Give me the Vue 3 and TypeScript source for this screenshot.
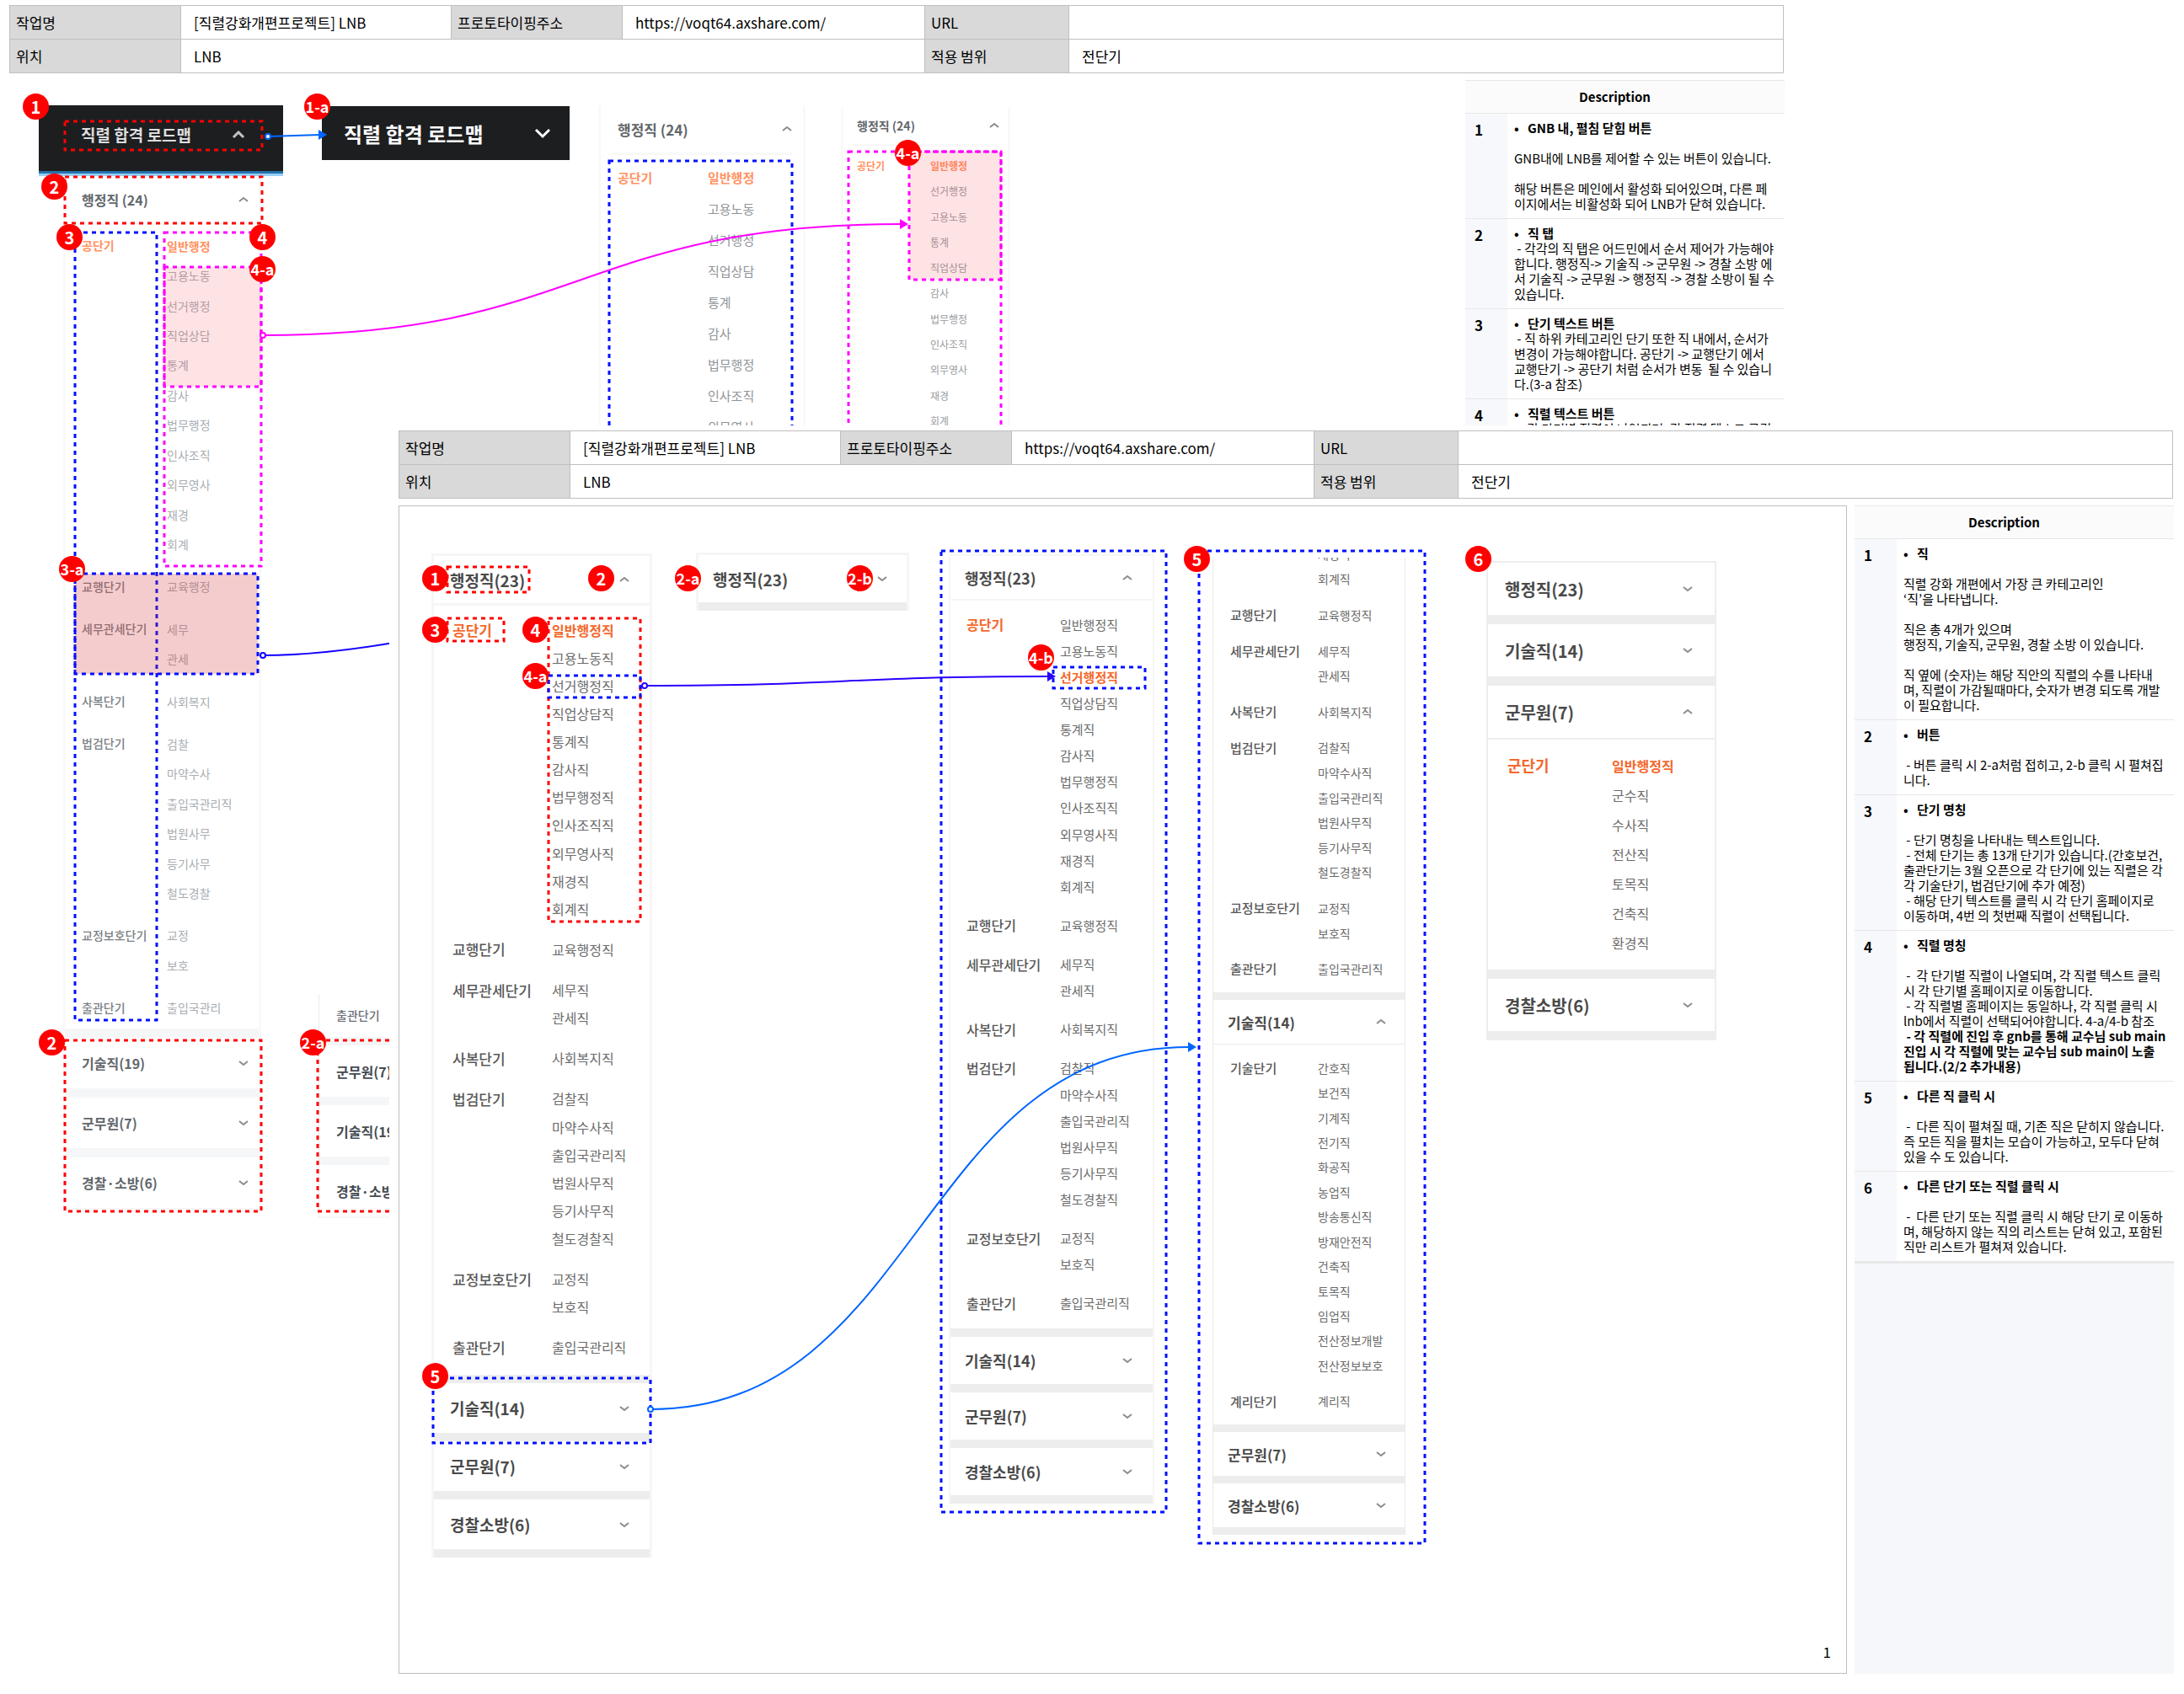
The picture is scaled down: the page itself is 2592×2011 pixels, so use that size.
<script setup lang="ts">
type Direction = 'up' | 'down'

interface Group {
  name: string
  items: string[]
  activeName?: boolean
  activeItem?: number
}

interface Section {
  title?: string
  arrow?: Direction
  groups?: Group[]
  height?: number
}

interface Panel {
  kind: string
  x: number
  y: number
  width: number
  sections: Section[]
}

interface Marker {
  label: string
  x: number
  y: number
}

interface Frame {
  tone: 'red' | 'blue' | 'magenta'
  x: number
  y: number
  w: number
  h: number
  fill?: 'rose' | 'brick'
}

interface Connector {
  tone: string
  start: [number, number]
  path: string
  tip?: [number, number]
}

interface Line {
  text: string
  strong?: boolean
}

interface Note {
  no: number
  title: string
  lines: Line[]
}

interface Board {
  id: string
  panels: Panel[]
  markers: Marker[]
  frames: Frame[]
  connectors: Connector[]
  notes: Note[]
  page?: number
}

const plain = (...rows: string[]): Line[] => rows.map((text) => ({ text }))

const oldGroups: Group[] = [
  {
    name: '공단기',
    items: ['일반행정', '고용노동', '선거행정', '직업상담', '통계', '감사', '법무행정', '인사조직', '외무영사', '재경', '회계'],
    activeName: true,
    activeItem: 0
  },
  { name: '교행단기', items: ['교육행정'] },
  { name: '세무관세단기', items: ['세무', '관세'] },
  { name: '사복단기', items: ['사회복지'] },
  { name: '법검단기', items: ['검찰', '마약수사', '출입국관리직', '법원사무', '등기사무', '철도경찰'] },
  { name: '교정보호단기', items: ['교정', '보호'] },
  { name: '출관단기', items: ['출입국관리'] }
]

const shortGroup: Group = { ...oldGroups[0], items: oldGroups[0].items.slice(0, 9) }

const reorderedGroup: Group = {
  name: '공단기',
  items: ['일반행정', '선거행정', '고용노동', '통계', '직업상담', '감사', '법무행정', '인사조직', '외무영사', '재경', '회계'],
  activeName: true,
  activeItem: 0
}

const laterGroups: Group[] = [
  { name: '교행단기', items: ['교육행정직'] },
  { name: '세무관세단기', items: ['세무직', '관세직'] },
  { name: '사복단기', items: ['사회복지직'] },
  { name: '법검단기', items: ['검찰직', '마약수사직', '출입국관리직', '법원사무직', '등기사무직', '철도경찰직'] },
  { name: '교정보호단기', items: ['교정직', '보호직'] },
  { name: '출관단기', items: ['출입국관리직'] }
]

const adminGroups = (activeItem: number): Group[] => [
  {
    name: '공단기',
    items: ['일반행정직', '고용노동직', '선거행정직', '직업상담직', '통계직', '감사직', '법무행정직', '인사조직직', '외무영사직', '재경직', '회계직'],
    activeName: true,
    activeItem
  },
  ...laterGroups
]

const techGroups: Group[] = [
  {
    name: '기술단기',
    items: ['간호직', '보건직', '기계직', '전기직', '화공직', '농업직', '방송통신직', '방재안전직', '건축직', '토목직', '임업직', '전산정보개발', '전산정보보호']
  },
  { name: '계리단기', items: ['계리직'] }
]

const closed = (...titles: string[]): Section[] => titles.map((title) => ({ title, arrow: 'down' as Direction }))

const boards: Board[] = [
  {
    id: 'back',
    panels: [
      {
        kind: 'first',
        x: 75,
        y: 210,
        width: 235,
        sections: [
          { title: '행정직 (24)', arrow: 'up', groups: oldGroups, height: 940 },
          ...closed('기술직(19)', '군무원(7)', '경찰·소방(6)')
        ]
      },
      {
        kind: 'second',
        x: 378,
        y: 1181,
        width: 235,
        sections: [
          { groups: [{ name: '출관단기', items: [''] }], height: 35 },
          ...closed('군무원(7)', '기술직(19)', '경찰·소방(6)')
        ]
      },
      {
        kind: 'third',
        x: 710,
        y: 125,
        width: 246,
        sections: [{ title: '행정직 (24)', arrow: 'up', groups: [shortGroup], height: 334 }]
      },
      {
        kind: 'fourth',
        x: 998,
        y: 127,
        width: 201,
        sections: [{ title: '행정직 (24)', arrow: 'up', groups: [reorderedGroup], height: 333 }]
      }
    ],
    markers: [
      { label: '1', x: 42, y: 126 },
      { label: '1-a', x: 376, y: 126 },
      { label: '2', x: 64, y: 221 },
      { label: '3', x: 82, y: 281 },
      { label: '4', x: 311, y: 281 },
      { label: '4-a', x: 311, y: 319 },
      { label: '4-a', x: 1077, y: 181 },
      { label: '3-a', x: 85, y: 675 },
      { label: '2', x: 61, y: 1237 },
      { label: '2-a', x: 371, y: 1237 }
    ],
    frames: [
      { tone: 'red', x: 77, y: 144, w: 234, h: 34 },
      { tone: 'red', x: 77, y: 210, w: 234, h: 55 },
      { tone: 'blue', x: 89, y: 276, w: 97, h: 935 },
      { tone: 'magenta', x: 195, y: 276, w: 115, h: 396 },
      { tone: 'magenta', x: 195, y: 317, w: 115, h: 142, fill: 'rose' },
      { tone: 'blue', x: 89, y: 681, w: 217, h: 119, fill: 'brick' },
      { tone: 'red', x: 77, y: 1235, w: 233, h: 203 },
      { tone: 'red', x: 377, y: 1235, w: 236, h: 203 },
      { tone: 'blue', x: 723, y: 191, w: 217, h: 420 },
      { tone: 'magenta', x: 1007, y: 180, w: 181, h: 400 },
      { tone: 'magenta', x: 1079, y: 180, w: 109, h: 152, fill: 'rose' }
    ],
    connectors: [
      { tone: '#0066ff', start: [318, 162], path: 'M318 162L380 160', tip: [388, 160] },
      { tone: '#ff00ff', start: [312, 398], path: 'M312 398C690 398 690 266 1069 266', tip: [1078, 266] },
      { tone: '#1400ff', start: [312, 778], path: 'M312 778C370 778 430 770 490 759' }
    ],
    notes: [
      {
        no: 1,
        title: 'GNB 내, 펼침 닫힘 버튼',
        lines: plain('', 'GNB내에 LNB를 제어할 수 있는 버튼이 있습니다.', '', '해당 버튼은 메인에서 활성화 되어있으며, 다른 페', '이지에서는 비활성화 되어 LNB가 닫혀 있습니다.')
      },
      {
        no: 2,
        title: '직 탭',
        lines: plain(' - 각각의 직 탭은 어드민에서 순서 제어가 가능해야', '합니다. 행정직-> 기술직 -> 군무원 -> 경찰 소방 에', '서 기술직 -> 군무원 -> 행정직 -> 경찰 소방이 될 수', '있습니다.')
      },
      {
        no: 3,
        title: '단기 텍스트 버튼',
        lines: plain(' - 직 하위 카테고리인 단기 또한 직 내에서, 순서가', '변경이 가능해야합니다. 공단기 -> 교행단기 에서', '교행단기 -> 공단기 처럼 순서가 변동  될 수 있습니', '다.(3-a 참조)')
      },
      {
        no: 4,
        title: '직렬 텍스트 버튼',
        lines: plain(' -  각 단기별 직렬이 나열되며, 각 직렬 텍스트 클릭')
      }
    ]
  },
  {
    id: 'front',
    panels: [
      {
        kind: 'fifth',
        x: 50,
        y: 152,
        width: 262,
        sections: [
          { title: '행정직(23)', arrow: 'up', groups: adminGroups(0), height: 885 },
          ...closed('기술직(14)', '군무원(7)', '경찰소방(6)')
        ]
      },
      { kind: 'sixth', x: 364, y: 151, width: 253, sections: closed('행정직(23)') },
      {
        kind: 'seventh',
        x: 664,
        y: 153,
        width: 244,
        sections: [
          { title: '행정직(23)', arrow: 'up', groups: adminGroups(2), height: 837 },
          ...closed('기술직(14)', '군무원(7)', '경찰소방(6)')
        ]
      },
      {
        kind: 'eighth',
        x: 977,
        y: 157,
        width: 229,
        sections: [
          { groups: [{ name: '', items: ['재경직', '회계직'] }, ...laterGroups], height: 522 },
          { title: '기술직(14)', arrow: 'up', groups: techGroups, height: 425 },
          ...closed('군무원(7)', '경찰소방(6)')
        ]
      },
      {
        kind: 'ninth',
        x: 1302,
        y: 161,
        width: 273,
        sections: [
          ...closed('행정직(23)', '기술직(14)'),
          {
            title: '군무원(7)',
            arrow: 'up',
            groups: [
              {
                name: '군단기',
                items: ['일반행정직', '군수직', '수사직', '전산직', '토목직', '건축직', '환경직'],
                activeName: true,
                activeItem: 0
              }
            ],
            height: 245
          },
          ...closed('경찰소방(6)')
        ]
      }
    ],
    markers: [
      { label: '1', x: 54, y: 181 },
      { label: '2', x: 251, y: 181 },
      { label: '2-a', x: 354, y: 181 },
      { label: '2-b', x: 558, y: 181 },
      { label: '3', x: 54, y: 242 },
      { label: '4', x: 173, y: 242 },
      { label: '4-a', x: 173, y: 297 },
      { label: '5', x: 54, y: 1128 },
      { label: '4-b', x: 773, y: 275 },
      { label: '5', x: 958, y: 158 },
      { label: '6', x: 1292, y: 158 }
    ],
    frames: [
      { tone: 'red', x: 69, y: 168, w: 97, h: 30 },
      { tone: 'red', x: 69, y: 229, w: 67, h: 27 },
      { tone: 'red', x: 189, y: 229, w: 109, h: 360 },
      { tone: 'blue', x: 189, y: 297, w: 109, h: 26 },
      { tone: 'blue', x: 52, y: 1131, w: 258, h: 77 },
      { tone: 'blue', x: 655, y: 149, w: 267, h: 1141 },
      { tone: 'blue', x: 788, y: 287, w: 109, h: 25 },
      { tone: 'blue', x: 961, y: 149, w: 268, h: 1178 }
    ],
    connectors: [
      { tone: '#2a00ff', start: [303, 309], path: 'M303 309C542 309 542 298 782 298', tip: [791, 298] },
      { tone: '#0066ff', start: [310, 1168], path: 'M310 1168C629 1168 629 738 949 738', tip: [958, 738] }
    ],
    notes: [
      {
        no: 1,
        title: '직',
        lines: plain('', '직렬 강화 개편에서 가장 큰 카테고리인', '‘직’을 나타냅니다.', '', '직은 총 4개가 있으며', '행정직, 기술직, 군무원, 경찰 소방 이 있습니다.', '', '직 옆에 (숫자)는 해당 직안의 직렬의 수를 나타내', '며, 직렬이 가감될때마다, 숫자가 변경 되도록 개발', '이 필요합니다.')
      },
      { no: 2, title: '버튼', lines: plain('', ' - 버튼 클릭 시 2-a처럼 접히고, 2-b 클릭 시 펼쳐집', '니다.') },
      {
        no: 3,
        title: '단기 명칭',
        lines: plain('', ' - 단기 명칭을 나타내는 텍스트입니다.', ' - 전체 단기는 총 13개 단기가 있습니다.(간호보건,', '출관단기는 3월 오픈으로 각 단기에 있는 직렬은 각', '각 기술단기, 법검단기에 추가 예정)', ' - 해당 단기 텍스트를 클릭 시 각 단기 홈페이지로', '이동하며, 4번 의 첫번째 직렬이 선택됩니다.')
      },
      {
        no: 4,
        title: '직렬 명칭',
        lines: [
          ...plain('', ' -  각 단기별 직렬이 나열되며, 각 직렬 텍스트 클릭', '시 각 단기별 홈페이지로 이동합니다.', ' - 각 직렬별 홈페이지는 동일하나, 각 직렬 클릭 시', 'lnb에서 직렬이 선택되어야합니다. 4-a/4-b 참조'),
          { text: ' - 각 직렬에 진입 후 gnb를 통해 교수님 sub main', strong: true },
          { text: '진입 시 각 직렬에 맞는 교수님 sub main이 노출', strong: true },
          { text: '됩니다.(2/2 추가내용)', strong: true }
        ]
      },
      {
        no: 5,
        title: '다른 직 클릭 시',
        lines: plain('', ' -  다른 직이 펼쳐질 때, 기존 직은 닫히지 않습니다.', '즉 모든 직을 펼치는 모습이 가능하고, 모두다 닫혀', '있을 수 도 있습니다.')
      },
      {
        no: 6,
        title: '다른 단기 또는 직렬 클릭 시',
        lines: plain('', ' -  다른 단기 또는 직렬 클릭 시 해당 단기 로 이동하', '며, 해당하지 않는 직의 리스트는 닫혀 있고, 포함된', '직만 리스트가 펼쳐져 있습니다.')
      }
    ],
    page: 1
  }
]

const at = (p: { x: number; y: number }) => ({ left: `${p.x}px`, top: `${p.y}px` })
const arrowHead = ([x, y]: [number, number]) => `${x},${y} ${x - 10},${y - 6} ${x - 10},${y + 6}`
</script>

<template>
  <main class="stage">
    <article v-for="board in boards" :key="board.id" class="board" :class="board.id">
      <table class="meta">
        <colgroup>
          <col class="c-label" /><col class="c-name" /><col class="c-label" /><col class="c-address" /><col class="c-scope" /><col />
        </colgroup>
        <tbody>
          <tr>
            <th scope="row">작업명</th>
            <td>[직렬강화개편프로젝트] LNB</td>
            <th scope="row">프로토타이핑주소</th>
            <td><a href="https://voqt64.axshare.com/">https://voqt64.axshare.com/</a></td>
            <th scope="row">URL</th>
            <td></td>
          </tr>
          <tr>
            <th scope="row">위치</th>
            <td colspan="3">LNB</td>
            <th scope="row">적용 범위</th>
            <td>전단기</td>
          </tr>
        </tbody>
      </table>

      <div class="body">
        <section class="canvas">
          <template v-if="board.id === 'back'">
            <button type="button" class="gnb gnb-open">
              <span>직렬 합격 로드맵</span>
              <svg width="16" height="10" viewBox="0 0 16 10"><path d="M2 8L8 2L14 8" /></svg>
            </button>
            <button type="button" class="gnb gnb-closed">
              <span>직렬 합격 로드맵</span>
              <svg width="20" height="13" viewBox="0 0 20 13"><path d="M2 2L10 10L18 2" /></svg>
            </button>
          </template>

          <nav
            v-for="panel in board.panels"
            :key="panel.kind"
            class="lnb"
            :class="panel.kind"
            :style="{ ...at(panel), width: `${panel.width}px` }"
          >
            <div v-for="(section, s) in panel.sections" :key="s" class="section">
              <button v-if="section.title" type="button" class="row">
                <span>{{ section.title }}</span>
                <svg class="chevron" width="12" height="8" viewBox="0 0 12 8">
                  <path :d="section.arrow === 'up' ? 'M1 6L6 2L11 6' : 'M1 2L6 6L11 2'" />
                </svg>
              </button>
              <div v-if="section.groups" class="open">
                <div class="groups" :style="{ height: `${section.height}px` }">
                  <div v-for="(group, g) in section.groups" :key="g" class="group" :style="{ flexGrow: group.items.length }">
                    <a href="#" class="name" :class="{ active: group.activeName }">{{ group.name }}</a>
                    <ul>
                      <li v-for="(item, i) in group.items" :key="item">
                        <a href="#" :class="{ active: group.activeItem === i }">{{ item }}</a>
                      </li>
                    </ul>
                  </div>
                </div>
              </div>
            </div>
          </nav>

          <svg class="overlay" aria-hidden="true">
            <rect
              v-for="(f, i) in board.frames"
              :key="`f${i}`"
              class="frame"
              :class="[f.tone, f.fill]"
              :x="f.x"
              :y="f.y"
              :width="f.w"
              :height="f.h"
            />
            <g v-for="(c, i) in board.connectors" :key="`c${i}`" :stroke="c.tone">
              <path class="wire" :d="c.path" />
              <polygon v-if="c.tip" :points="arrowHead(c.tip)" :fill="c.tone" stroke="none" />
              <circle class="port" :cx="c.start[0]" :cy="c.start[1]" r="3" />
            </g>
          </svg>

          <span
            v-for="(m, i) in board.markers"
            :key="`m${i}`"
            class="marker"
            :class="{ long: m.label.length > 1 }"
            :style="at(m)"
          >{{ m.label }}</span>

          <span v-if="board.page" class="page">{{ board.page }}</span>
        </section>

        <aside class="side">
          <table class="notes">
            <thead>
              <tr><th colspan="2" scope="col">Description</th></tr>
            </thead>
            <tbody>
              <tr v-for="note in board.notes" :key="note.no">
                <th scope="row">{{ note.no }}</th>
                <td>
                  <p class="note-title"><span class="dot">•</span>{{ note.title }}</p>
                  <p v-for="(line, l) in note.lines" :key="l" :class="{ strong: line.strong }">{{ line.text }}</p>
                </td>
              </tr>
            </tbody>
          </table>
        </aside>
      </div>
    </article>
  </main>
</template>

<style>
body {
  background: #fff;
}
</style>

<style scoped>
.stage {
  display: grid;
  padding-bottom: 24px;
  overflow: hidden;
  font-family: "Noto Sans CJK KR", "Noto Sans", sans-serif;
  color: #000;
}
.board {
  position: relative;
  grid-area: 1 / 1;
  align-self: start;
  box-sizing: border-box;
  width: calc(100% - 475px);
  padding: 6px 0 0 11px;
  background: #fff;
}
.front {
  margin: 505px 0 0 462px;
}
a {
  color: inherit;
  text-decoration: none;
}
button {
  border: 0;
  margin: 0;
  font-family: inherit;
  text-align: left;
  cursor: pointer;
}

.meta {
  width: 100%;
  table-layout: fixed;
  border-collapse: collapse;
  font-size: 17px;
  line-height: 24px;
}
.meta .c-label { width: 203px; }
.meta .c-name { width: 321px; }
.meta .c-address { width: 359px; }
.meta .c-scope { width: 171px; }
.meta th,
.meta td {
  box-sizing: border-box;
  height: 40px;
  padding: 1px 15px 0;
  border: 1px solid #bfbfbf;
  font-weight: 400;
  text-align: left;
  white-space: nowrap;
}
.meta th {
  padding: 1px 7px 0;
  background: #d9d9d9;
}

.body {
  display: grid;
  grid-template-columns: minmax(0, 1fr) 379px;
  gap: 9px;
  margin: 8px -1px 0 0;
}
.canvas {
  min-height: 1385px;
  border: 1px solid transparent;
}
.front .canvas {
  border-color: #bfbfbf;
}
.page {
  position: absolute;
  right: 406px;
  bottom: 14px;
  font-size: 17px;
  line-height: 24px;
}

.side {
  background: #f6f7fa;
}
.notes {
  width: 100%;
  border-spacing: 0;
  border-bottom: 2px solid #e8e8e8;
  background: #fff;
  font-size: 15px;
  line-height: 18px;
}
.notes thead th {
  height: 38px;
  padding: 0 24px 0 0;
  border-top: 1px solid #e7e7e8;
  border-bottom: 1px solid #e7e7e8;
  background: #fbfbfb;
  font-weight: 700;
}
.notes tbody th {
  width: 39px;
  padding: 10px 0 6px 11px;
  border-bottom: 1px solid #e7e7e8;
  background: #f7f8fb;
  font-size: 17px;
  font-weight: 700;
  text-align: left;
  vertical-align: top;
}
.notes td {
  padding: 8px 0 8px 8px;
  border-bottom: 1px solid #e7e7e8;
  vertical-align: top;
}
.notes p {
  height: 18px;
  margin: 0;
  white-space: pre;
}
.notes .note-title,
.notes .strong {
  font-weight: 700;
}
.dot {
  display: inline-block;
  width: 16px;
}

.gnb {
  position: absolute;
  display: flex;
  align-items: center;
  justify-content: space-between;
  box-sizing: border-box;
  background: #1d1e20;
  font-weight: 700;
}
.gnb path {
  fill: none;
  stroke: #fff;
  stroke-width: 3;
}
.gnb-open {
  left: 46px;
  top: 125px;
  width: 290px;
  height: 84px;
  padding: 0 45px 12px 50px;
  border-bottom: 3px solid #95d0fa;
  box-shadow: inset 0 -3px #2472aa;
  color: #ddd;
  font-size: 19px;
}
.gnb-open path {
  stroke: #c4c4c4;
}
.gnb-closed {
  left: 382px;
  top: 126px;
  width: 294px;
  height: 64px;
  padding: 0 22px 0 26px;
  color: #fff;
  font-size: 24px;
}

.lnb {
  position: absolute;
  box-sizing: border-box;
  overflow: hidden;
  border: solid var(--edge);
  border-width: 0 var(--line);
  background: #fff;
}
.row {
  display: flex;
  align-items: center;
  justify-content: space-between;
  box-sizing: border-box;
  width: 100%;
  height: var(--row);
  padding: 0 var(--right) 0 var(--left);
  background: #fff;
  color: var(--title);
  font-size: var(--title-size);
  font-weight: 700;
}
.chevron path {
  fill: none;
  stroke: #8c8c8c;
  stroke-width: 2;
}
.section {
  border-bottom: var(--band) solid #ededed;
}
.open {
  padding: var(--above) 0 var(--below) var(--indent);
}
.row + .open {
  border-top: var(--line) solid var(--edge);
}
.groups {
  display: flex;
  flex-direction: column;
  gap: var(--gap);
}
.group {
  display: grid;
  flex-basis: 0;
  grid-template-columns: var(--column) 1fr;
  min-height: 0;
  line-height: 20px;
  white-space: nowrap;
}
.group ul {
  display: flex;
  flex-direction: column;
  min-height: 0;
  margin: 0;
  padding: 0;
  list-style: none;
}
.group li {
  display: flex;
  flex: 1 1 0;
  align-items: center;
  color: var(--item);
  font-size: var(--item-size);
}
.name {
  height: var(--pitch);
  color: var(--name);
  font-size: var(--name-size);
  font-weight: 500;
  line-height: var(--pitch);
}
.lnb .active {
  color: var(--accent);
  font-weight: 700;
}

.back .lnb {
  --accent: #ff9262;
  --edge: #f9f9f9;
  --line: 3px;
  --gap: 15px;
  --title: #62676c;
  --name: #7b8085;
  --item: #a9aeb3;
  --title-size: 16px;
  --name-size: 14px;
  --item-size: 14px;
  --pitch: 35px;
}
.back .section {
  border-bottom-color: #f5f6f7;
}
.lnb.first {
  --row: 60px;
  --left: 19px;
  --right: 12px;
  --indent: 19px;
  --column: 101px;
  --above: 7px;
  --below: 7px;
  --band: 11px;
}
.first .section:first-child .row {
  height: 54px;
}
.first .section:last-child,
.second .section:last-child {
  border-bottom-width: 2px;
}
.back .lnb.second {
  --edge: #e8e9eb;
  --line: 1px;
  --row: 61px;
  --left: 20px;
  --right: 12px;
  --indent: 20px;
  --column: 101px;
  --above: 7px;
  --below: 8px;
  --band: 10px;
  --title: #454b52;
  --name: #6b7078;
}
.back .lnb.third {
  --title-size: 17px;
  --name-size: 15px;
  --item-size: 15px;
  --row: 56px;
  --left: 20px;
  --right: 13px;
  --indent: 7px;
  --column: 107px;
  --above: 8px;
  --below: 0;
  --band: 0;
  --pitch: 37px;
  --item: #8f9499;
}
.third .open {
  margin: 0 13px;
}
.back .lnb.fourth {
  --title-size: 14px;
  --name-size: 12px;
  --item-size: 12px;
  --row: 44px;
  --left: 16px;
  --right: 10px;
  --indent: 5px;
  --column: 87px;
  --above: 8px;
  --below: 0;
  --band: 0;
  --pitch: 30px;
  --item: #999da2;
}
.fourth .open {
  margin: 0 11px;
}

.front .lnb {
  --accent: #f4682c;
  --title: #4a4a4a;
  --name: #585858;
  --item: #6c6c6c;
  --edge: #f6f6f6;
}
.lnb.fifth,
.lnb.sixth {
  --line: 3px;
  --title-size: 19px;
  --name-size: 17px;
  --item-size: 16px;
  --row: 59px;
  --left: 19px;
  --right: 24px;
  --indent: 22px;
  --column: 118px;
  --above: 12px;
  --below: 16px;
  --band: 10px;
  --gap: 15px;
  --pitch: 33px;
}
.lnb.fifth,
.lnb.sixth,
.lnb.seventh,
.lnb.ninth {
  border-top-width: var(--line);
}
.fifth .section:first-child .row {
  height: 56px;
}
.lnb.sixth {
  --left: 17px;
  --right: 23px;
  --row: 56px;
}
.lnb.seventh {
  --line: 2px;
  --title-size: 18px;
  --name-size: 16px;
  --item-size: 15px;
  --row: 56px;
  --left: 17px;
  --right: 24px;
  --indent: 19px;
  --column: 111px;
  --above: 13px;
  --below: 14px;
  --band: 10px;
  --gap: 15px;
  --pitch: 31px;
}
.seventh .section:first-child .row {
  height: 51px;
}
.front .lnb.eighth {
  --edge: #eaeaea;
  --line: 1px;
  --title-size: 17px;
  --name-size: 15px;
  --item-size: 14px;
  --row: 52px;
  --left: 17px;
  --right: 22px;
  --indent: 20px;
  --column: 104px;
  --above: 13px;
  --below: 13px;
  --band: 9px;
  --gap: 13px;
  --pitch: 29px;
}
.eighth .section:first-child .open {
  margin-top: -32px;
}
.front .lnb.ninth {
  --edge: #ededed;
  --line: 2px;
  --title-size: 20px;
  --name-size: 18px;
  --item-size: 16px;
  --row: 62px;
  --left: 20px;
  --right: 26px;
  --indent: 23px;
  --column: 124px;
  --above: 13px;
  --below: 15px;
  --band: 11px;
  --gap: 15px;
  --pitch: 35px;
}

.overlay {
  position: absolute;
  inset: 0;
  width: 100%;
  height: 100%;
  pointer-events: none;
}
.frame {
  fill: none;
  stroke-width: 3;
  stroke-dasharray: 5 5;
}
.red { stroke: #f00; }
.blue { stroke: #0010ff; }
.magenta { stroke: #f0f; }
.rose { fill: rgb(250 60 70 / 14%); }
.brick { fill: rgb(210 52 55 / 25%); }
.wire {
  fill: none;
  stroke-width: 2;
}
.port {
  fill: #fff;
  stroke-width: 2;
}
.marker {
  position: absolute;
  display: flex;
  align-items: center;
  justify-content: center;
  box-sizing: border-box;
  width: 31px;
  height: 31px;
  margin: -15px 0 0 -15px;
  border-radius: 50%;
  background: #f00;
  color: #fff;
  font-size: 20px;
  font-weight: 700;
  line-height: 31px;
  white-space: nowrap;
}
.marker.long {
  font-size: 18px;
}
</style>
